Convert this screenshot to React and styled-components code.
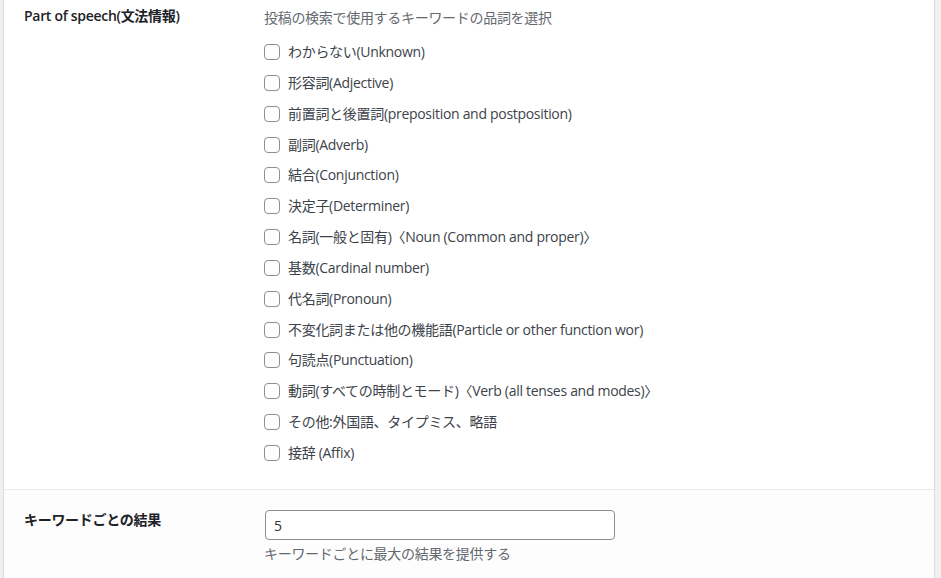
import React from "react";
import styled, { createGlobalStyle } from "styled-components";

const GlobalStyle = createGlobalStyle`
  html, body {
    margin: 0;
    padding: 0;
    background: #f0f0f1;
    overflow: hidden;
  }
  body {
    font-family: "Open Sans", "Noto Sans CJK JP", sans-serif;
    font-size: 14px;
    letter-spacing: -0.3px;
    color: #3c434a;
  }
`;

const partsOfSpeech = [
  "わからない(Unknown)",
  "形容詞(Adjective)",
  "前置詞と後置詞(preposition and postposition)",
  "副詞(Adverb)",
  "結合(Conjunction)",
  "決定子(Determiner)",
  "名詞(一般と固有)〈Noun (Common and proper)〉",
  "基数(Cardinal number)",
  "代名詞(Pronoun)",
  "不変化詞または他の機能語(Particle or other function wor)",
  "句読点(Punctuation)",
  "動詞(すべての時制とモード)〈Verb (all tenses and modes)〉",
  "その他:外国語、タイプミス、略語",
  "接辞 (Affix)",
];

function App() {
  return (
    <>
      <GlobalStyle />
      <Panel>
        <SettingRow>
          <RowLabel>Part of speech(文法情報)</RowLabel>
          <RowField>
            <Description>投稿の検索で使用するキーワードの品詞を選択</Description>
            <CheckList>
              {partsOfSpeech.map((item) => (
                <CheckItem key={item}>
                  <CheckBox type="checkbox" />
                  <span>{item}</span>
                </CheckItem>
              ))}
            </CheckList>
          </RowField>
        </SettingRow>
        <SettingRow $bordered>
          <RowLabel>キーワードごとの結果</RowLabel>
          <RowField>
            <TextInput type="text" defaultValue="5" />
            <HelpText>キーワードごとに最大の結果を提供する</HelpText>
          </RowField>
        </SettingRow>
      </Panel>
    </>
  );
}

export default App;

const Panel = styled.div`
  margin-left: 3px;
  width: 930px;
  height: 578px;
  background: #fff;
  border-left: 1px solid #dcdcde;
  border-right: 1px solid #dcdcde;
`;

const SettingRow = styled.div`
  display: grid;
  grid-template-columns: 260px 1fr;
  padding: ${(p) => (p.$bordered ? "20px 0 20px" : "6px 0 20.6px")};
  border-top: ${(p) => (p.$bordered ? "1px solid #ebebeb" : "none")};
  background: ${(p) => (p.$bordered ? "#fdfdfd" : "#fff")};
`;

const RowLabel = styled.div`
  padding-left: 20px;
  font-weight: 600;
  line-height: 20px;
  color: #1d2327;
`;

const RowField = styled.div`
  display: flex;
  flex-direction: column;
  white-space: nowrap;
`;

const Description = styled.p`
  margin: 2px 0 8.6px;
  line-height: 20px;
  color: #646970;
`;

const CheckList = styled.div`
  display: flex;
  flex-direction: column;
`;

const CheckItem = styled.label`
  display: flex;
  align-items: center;
  gap: 8px;
  height: 30.85px;
  line-height: 20px;
  color: #3c434a;
`;

const CheckBox = styled.input`
  appearance: none;
  flex-shrink: 0;
  margin: 0;
  width: 16px;
  height: 16px;
  border: 1px solid #8c8f94;
  border-radius: 4px;
  background: #fff;
  box-sizing: border-box;
`;

const TextInput = styled.input`
  box-sizing: border-box;
  width: 350px;
  height: 30px;
  margin: 0 0 0 1px;
  padding: 0 8px;
  border: 1px solid #8c8f94;
  border-radius: 4px;
  background: #fff;
  font: inherit;
  color: #2c3338;
  outline: none;
`;

const HelpText = styled.p`
  margin: 4px 0 0;
  line-height: 20px;
  color: #646970;
`;
